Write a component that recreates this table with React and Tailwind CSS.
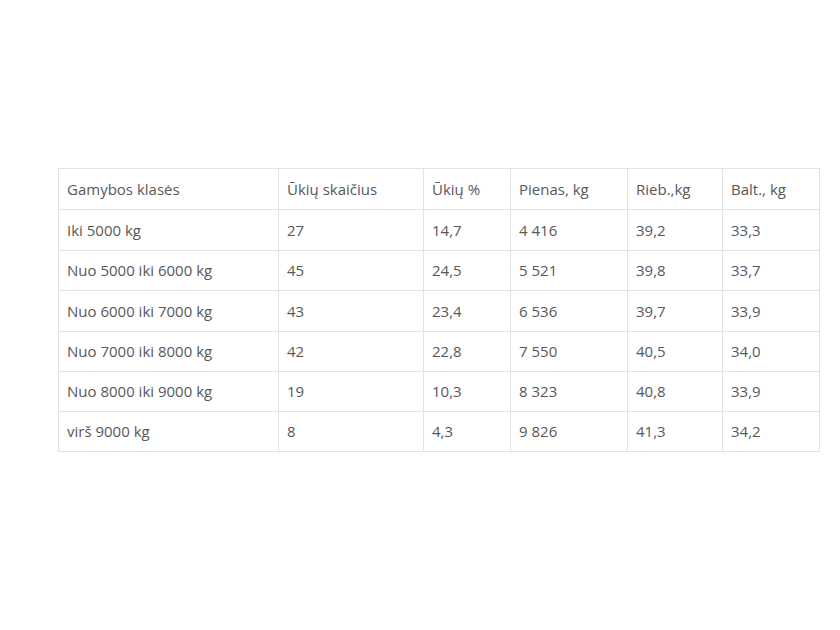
const headers = ['Gamybos klasės', 'Ūkių skaičius', 'Ūkių %', 'Pienas, kg', 'Rieb.,kg', 'Balt., kg'];

const rows = [
  ['Iki 5000 kg', '27', '14,7', '4 416', '39,2', '33,3'],
  ['Nuo 5000 iki 6000 kg', '45', '24,5', '5 521', '39,8', '33,7'],
  ['Nuo 6000 iki 7000 kg', '43', '23,4', '6 536', '39,7', '33,9'],
  ['Nuo 7000 iki 8000 kg', '42', '22,8', '7 550', '40,5', '34,0'],
  ['Nuo 8000 iki 9000 kg', '19', '10,3', '8 323', '40,8', '33,9'],
  ['virš 9000 kg', '8', '4,3', '9 826', '41,3', '34,2'],
];

const widths = ['w-[220px]', 'w-[145px]', 'w-[87px]', 'w-[117px]', 'w-[95px]', 'w-[97px]'];
const heights = ['h-[41px]', 'h-[40px]', 'h-[41px]', 'h-[40px]', 'h-[40px]', 'h-[40px]'];

export default function App() {
  return (
    <div className="w-[840px] h-[630px] bg-white pt-[168px] pl-[58px]" style={{ fontFamily: '"Open Sans", sans-serif' }}>
      <table className="border-collapse table-fixed w-[762px] text-[15px] text-[#585858]">
        <thead>
          <tr className="h-[41px]">
            {headers.map((h, i) => (
              <th key={h} className={`${widths[i]} border border-[#e2e2e2] px-[8px] text-left font-normal`}>
                {h}
              </th>
            ))}
          </tr>
        </thead>
        <tbody>
          {rows.map((r, ri) => (
            <tr key={r[0]} className={heights[ri]}>
              {r.map((c, i) => (
                <td key={i} className="border border-[#e2e2e2] px-[8px]">
                  {c}
                </td>
              ))}
            </tr>
          ))}
        </tbody>
      </table>
    </div>
  );
}
